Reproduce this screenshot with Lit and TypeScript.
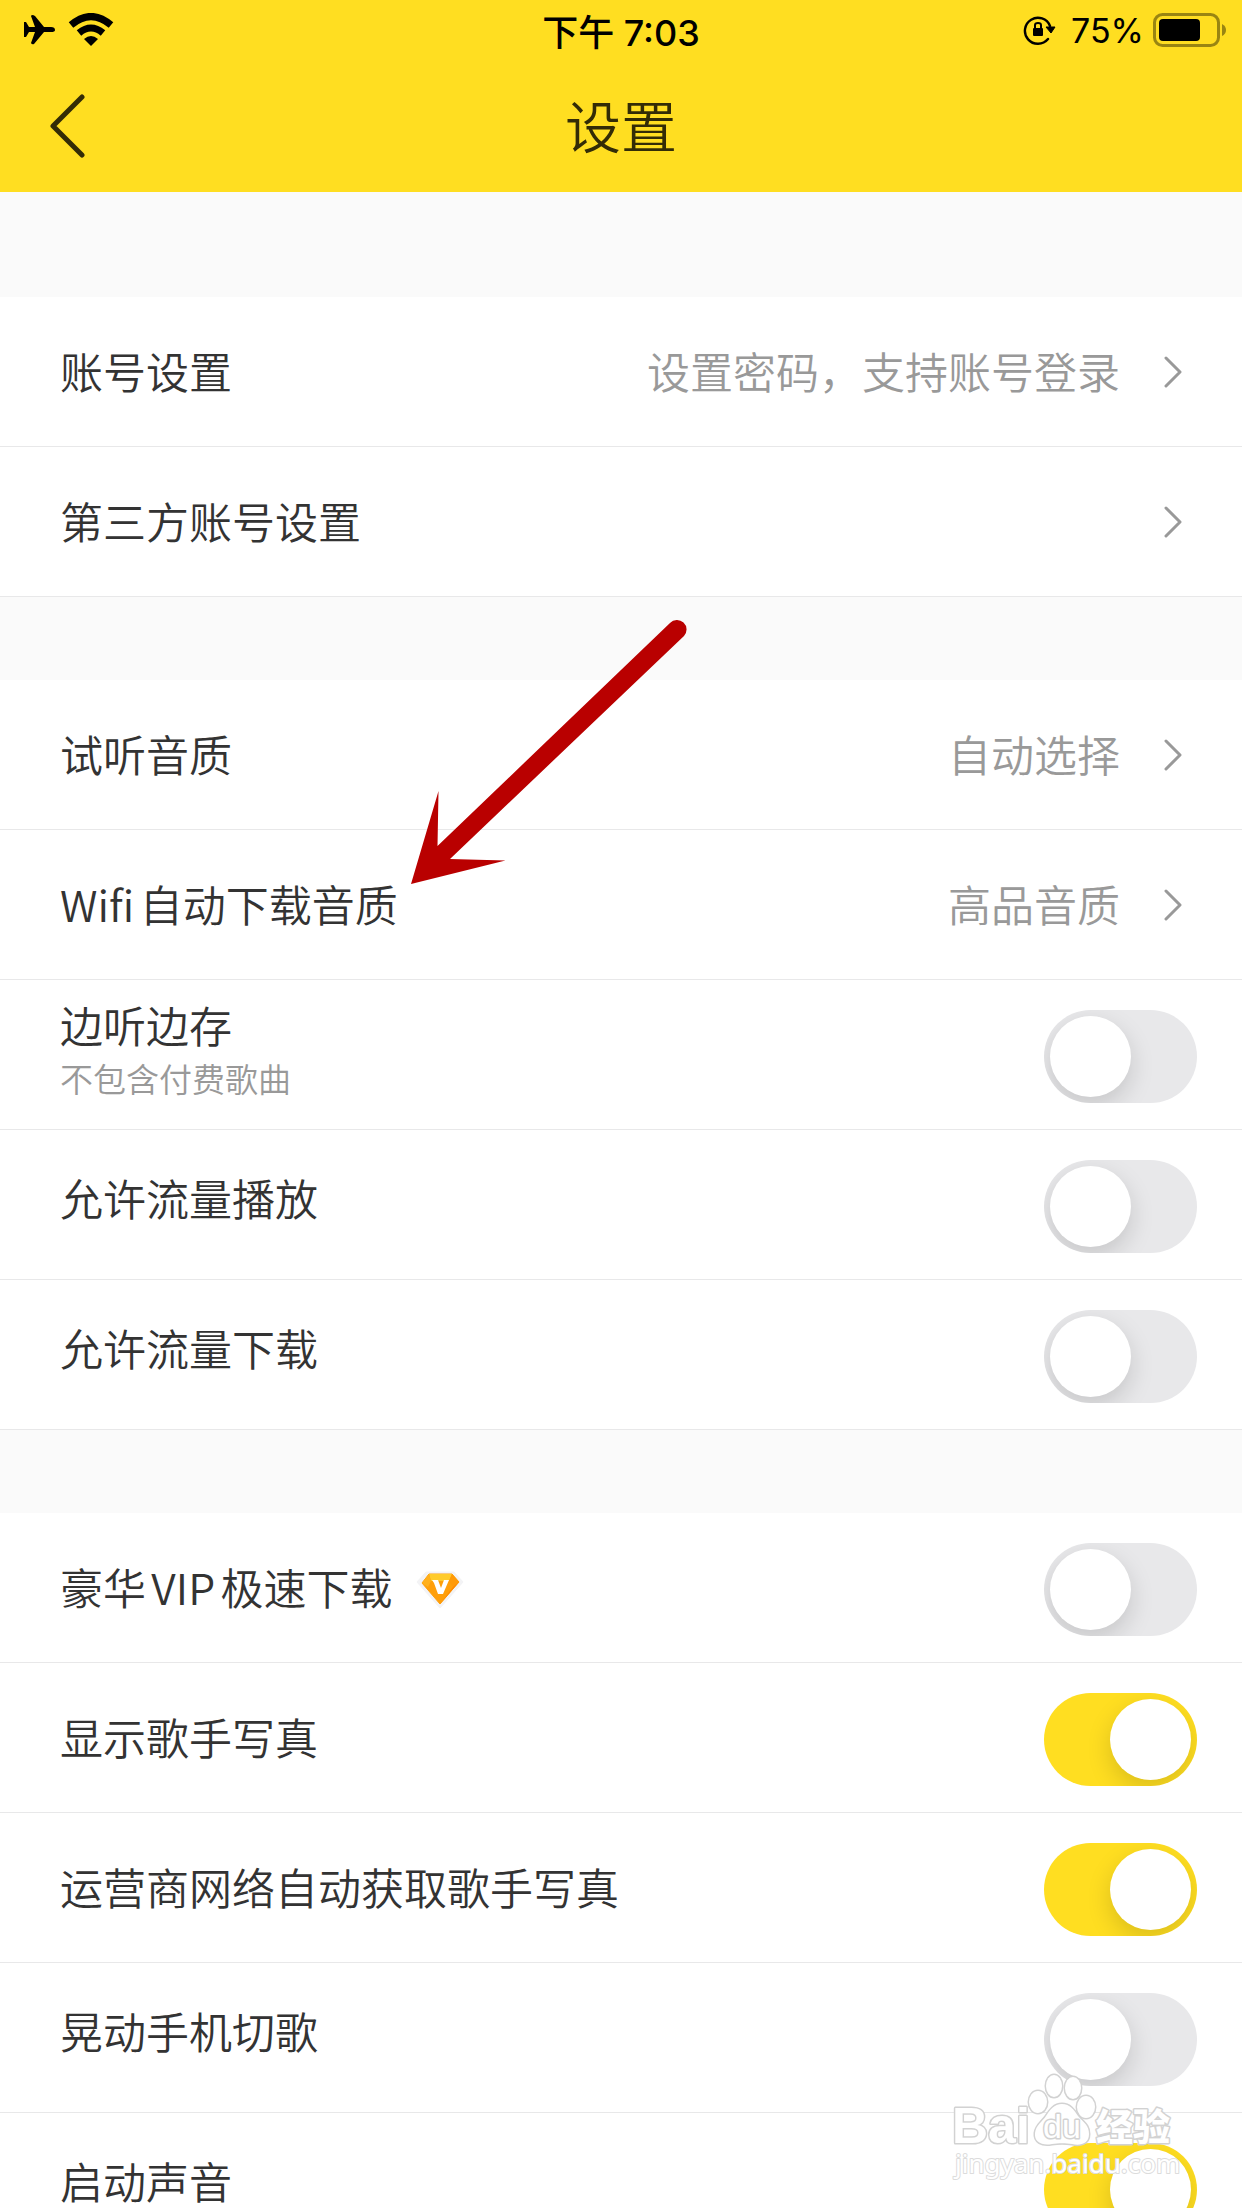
import { LitElement, html, css, svg, nothing } from "lit";
import { customElement, property } from "lit/decorators.js";

const chevron = html`<svg class="chevron" width="18" height="32" viewBox="0 0 18 32" aria-hidden="true">
  <path d="M2 2 L16 16 L2 30" fill="none" stroke="#999" stroke-width="3" stroke-linecap="round" stroke-linejoin="round" />
</svg>`;

const diamond = html`<svg class="diamond" width="48" height="38" viewBox="0 0 48 38" aria-hidden="true">
  <path d="M10 1 H38 L47 11 L24 37 L1 11 Z" fill="#f3f3f5" stroke="#f3f3f5" stroke-linejoin="round" />
  <path d="M13 3 H36 L43 11 L24 33 L6 12 Z" fill="#ff9f0a" stroke="#ff9f0a" stroke-linejoin="round" />
  <path d="M13 3 H36 L33 10 H15 Z" fill="#ffcb2b" />
  <path d="M13 3 L15 10 L12 16 L6 12 Z" fill="#ffb01c" />
  <path d="M36 3 L43 11 L37 16 L33 10 Z" fill="#ff9a08" />
  <path d="M43 11 L24 33 L37 16 Z" fill="#ff8500" />
  <path d="M16 9 H22 L25 17 L28 9 H33 L27 23 H22 L18 12 Z" fill="#fff" />
</svg>`;

@customElement("setting-row")
export class SettingRow extends LitElement {
  @property() label = "";
  @property() hint = "";
  @property() value = "";
  @property() kind: "link" | "switch" = "link";
  @property({ type: Boolean }) on = false;
  @property({ type: Boolean }) vip = false;
  @property({ type: Boolean }) raised = false;

  static styles = css`
    :host {
      display: block;
      background: #fff;
      border-bottom: 1px solid #e8e8e9;
    }
    .row {
      box-sizing: border-box;
      display: flex;
      align-items: center;
      width: 100%;
      min-height: 149px;
      padding: 0 60px;
      color: #333;
      font-size: 43px;
      font-weight: 350;
      line-height: 48px;
      text-decoration: none;
      text-autospace: normal;
    }
    .row.switch {
      padding: 4px 45px 0 60px;
    }
    .label {
      flex: 1;
      display: flex;
      align-items: center;
      gap: 24px;
    }
    .text {
      display: flex;
      flex-direction: column;
      gap: 6px;
      padding-bottom: 8px;
    }
    .raised .text {
      padding-bottom: 20px;
    }
    .raised .text.double {
      padding-bottom: 12px;
    }
    .hint {
      font-size: 33px;
      color: #999;
    }
    .value {
      color: #999;
      padding-bottom: 4px;
    }
    .row:not(.switch) .text {
      padding-bottom: 4px;
    }
    .chevron {
      margin-left: 44px;
    }
    input {
      appearance: none;
      flex: none;
      width: 153px;
      height: 93px;
      margin: 0;
      padding: 6px;
      box-sizing: border-box;
      border-radius: 47px;
      background: #e8e8ea;
      overflow: hidden;
      display: flex;
    }
    input::before {
      content: "";
      width: 81px;
      height: 81px;
      border-radius: 50%;
      background: #fff;
      box-shadow: 0 9px 24px rgba(0, 0, 0, 0.15);
    }
    input:checked {
      background: #ffde21;
      justify-content: flex-end;
    }
  `;

  render() {
    if (this.kind === "link") {
      return html`<a class="row" href="#">
        <span class="label"><span class="text">${this.label}</span></span>
        <span class="value">${this.value}</span>
        ${chevron}
      </a>`;
    }
    return html`<label class="row switch ${this.raised ? "raised" : ""}">
      <span class="label">
        <span class="text ${this.hint ? "double" : ""}">
          <span>${this.label}</span>
          ${this.hint ? html`<span class="hint">${this.hint}</span>` : nothing}
        </span>
        ${this.vip ? diamond : nothing}
      </span>
      <input type="checkbox" role="switch" .checked=${this.on} />
    </label>`;
  }
}

type Row = {
  label: string;
  hint?: string;
  value?: string;
  kind?: "link" | "switch";
  on?: boolean;
  vip?: boolean;
  raised?: boolean;
};

const groups: Row[][] = [
  [
    { label: "账号设置", value: "设置密码，支持账号登录" },
    { label: "第三方账号设置" },
  ],
  [
    { label: "试听音质", value: "自动选择" },
    { label: "Wifi自动下载音质", value: "高品音质" },
    { label: "边听边存", hint: "不包含付费歌曲", kind: "switch", raised: true },
    { label: "允许流量播放", kind: "switch", raised: true },
    { label: "允许流量下载", kind: "switch", raised: true },
  ],
  [
    { label: "豪华VIP极速下载", kind: "switch", vip: true },
    { label: "显示歌手写真", kind: "switch", on: true },
    { label: "运营商网络自动获取歌手写真", kind: "switch", on: true },
    { label: "晃动手机切歌", kind: "switch", raised: true },
    { label: "启动声音", kind: "switch", on: true, raised: true },
  ],
];

@customElement("app-root")
export class AppRoot extends LitElement {
  static styles = css`
    :host {
      position: relative;
      display: flex;
      flex-direction: column;
      height: 100vh;
      overflow: hidden;
      background: #fafafa;
      font-family: "Noto Sans CJK SC", sans-serif;
    }
    .top {
      flex: none;
      background: #ffde21;
    }
    .status {
      display: grid;
      grid-template-columns: 1fr auto 1fr;
      align-items: center;
      height: 60px;
      padding: 0 16px;
      color: #000;
      font-family: Inter, "Noto Sans CJK SC", sans-serif;
      font-size: 34px;
    }
    .signals {
      display: flex;
      align-items: center;
      gap: 12px;
      padding-left: 8px;
    }
    .time {
      font-size: 36px;
      font-weight: 500;
    }
    .power {
      display: flex;
      align-items: center;
      justify-content: flex-end;
      gap: 8px;
    }
    .lock {
      margin-right: 6px;
    }
    .nav {
      display: grid;
      grid-template-columns: 1fr auto 1fr;
      align-items: center;
      height: 132px;
      padding: 0 48px;
      color: #332c06;
    }
    .back {
      justify-self: start;
      display: flex;
      padding: 0;
      border: 0;
      background: none;
    }
    h1 {
      margin: 0;
      padding-bottom: 4px;
      font-size: 56px;
      font-weight: 350;
      line-height: 64px;
    }
    main {
      position: relative;
      flex: 1;
      min-height: 0;
      overflow-y: auto;
      scrollbar-width: none;
    }
    section {
      margin-top: 83px;
    }
    section:first-child {
      margin-top: 105px;
    }
    .arrow {
      position: absolute;
      left: 408px;
      top: 424px;
      pointer-events: none;
    }
    .watermark {
      position: absolute;
      right: 60px;
      bottom: 20px;
      pointer-events: none;
    }
    .mark {
      fill: #fff;
      stroke: #d2d2d2;
      stroke-width: 3px;
      stroke-linejoin: round;
      paint-order: stroke;
      font-family: "Liberation Sans", "Noto Sans CJK SC", sans-serif;
      font-weight: 700;
    }
    .brand {
      font-size: 50px;
    }
    .han {
      font-size: 37px;
      font-weight: 900;
      font-family: "Noto Sans CJK SC", sans-serif;
    }
    .du {
      font-size: 34px;
      font-weight: 400;
    }
    .site {
      font-family: "Noto Sans", sans-serif;
      font-size: 26px;
      font-weight: 400;
      stroke-width: 2px;
      stroke: #dcdcdc;
    }
  `;

  private statusBar() {
    return html`<div class="status">
      <div class="signals">
        <svg width="32" height="30" viewBox="0 0 32 30" role="img" aria-label="飞行模式">
          <path d="M0 7 H2 L5 12 H11 L7 1 Q7 0 9 0 L11 1 L20 12 H27 Q31 12 31 15 Q31 17 27 17 H20 L10 29 Q8 30 7 28 L11 17 L5 17 L2 22 H0 Z" />
        </svg>
        <svg width="46" height="34" viewBox="0 0 46 34" role="img" aria-label="无线网络">
          <g fill="none" stroke="#000" stroke-width="7">
            <path d="M3 12 Q23 -5 43 12" />
            <path d="M11 20 Q23 10 35 20" />
          </g>
          <path d="M16 26 Q23 20 30 26 L23 33 Z" />
        </svg>
      </div>
      <span class="time">下午 7:03</span>
      <div class="power">
        <svg class="lock" width="34" height="30" viewBox="0 0 34 30" role="img" aria-label="方向锁定">
          <path d="M27 11 A13 13 0 1 0 25 24" fill="none" stroke="#000" stroke-width="2.4" stroke-linecap="round" />
          <path d="M23 12 H32 L28 18 Z" stroke="#000" stroke-linejoin="round" />
          <rect x="10" y="13" width="10" height="8" rx="1" />
          <path d="M12 14 V10 Q12 8 15 8 Q18 8 18 10 V14" fill="none" stroke="#000" stroke-width="2" />
        </svg>
        <span>75%</span>
        <svg width="74" height="34" viewBox="0 0 74 34" role="img" aria-label="电池">
          <rect x="2.500" y="1.500" width="64" height="31" rx="8" fill="none" stroke="#998512" stroke-width="3" />
          <rect x="7" y="6" width="41" height="22" rx="4" />
          <path d="M70 11 Q74 13 74 17 Q74 21 70 23 Z" fill="#998512" />
        </svg>
      </div>
    </div>`;
  }

  render() {
    return html`
      <header class="top">
        ${this.statusBar()}
        <div class="nav">
          <button class="back" aria-label="返回">
            <svg width="38" height="64" viewBox="0 0 38 64" aria-hidden="true">
              <path d="M34 3 L5 32 L34 61" fill="none" stroke="#332c06" stroke-width="5" stroke-linecap="round" stroke-linejoin="round" />
            </svg>
          </button>
          <h1>设置</h1>
        </div>
      </header>
      <main>
        ${groups.map(
          (rows) => html`<section>
            ${rows.map(
              (r) => html`<setting-row
                .label=${r.label}
                .hint=${r.hint ?? ""}
                .value=${r.value ?? ""}
                .kind=${r.kind ?? "link"}
                .on=${r.on ?? false}
                .vip=${r.vip ?? false}
                .raised=${r.raised ?? false}
              ></setting-row>`
            )}
          </section>`
        )}
        <svg class="arrow" width="284" height="274" viewBox="0 0 284 274" aria-hidden="true">
          <path
            d="M3 268 L30.500 175 L29.500 230 L262 7 A9 9 0 0 1 276 20 L42 243 L97.500 244.500 Z"
            fill="#b90000"
          />
        </svg>
      </main>
      <svg class="watermark" width="232" height="120" viewBox="0 0 232 120" role="img" aria-label="Baidu 经验">
        ${svg`
          <g class="mark">
            <text class="brand" x="2" y="75">Bai</text>
            <ellipse cx="88" cy="34" rx="9" ry="11" />
            <ellipse cx="104" cy="18" rx="8" ry="11" />
            <ellipse cx="123" cy="20" rx="8" ry="11" />
            <ellipse cx="136" cy="39" rx="9" ry="11" />
            <path d="M112 36 C120 36 124 42 128 48 C134 55 139 57 139 66 C139 76 130 78 122 76 C116 75 108 75 102 76 C92 78 84 74 85 65 C86 57 92 54 96 48 C100 42 104 36 112 36 Z" />
            <text class="du" x="93" y="70">du</text>
            <text class="han" x="146" y="73">经验</text>
            <text class="site" x="5" y="105">jingyan.baidu.com</text>
          </g>
        `}
      </svg>
    `;
  }
}
